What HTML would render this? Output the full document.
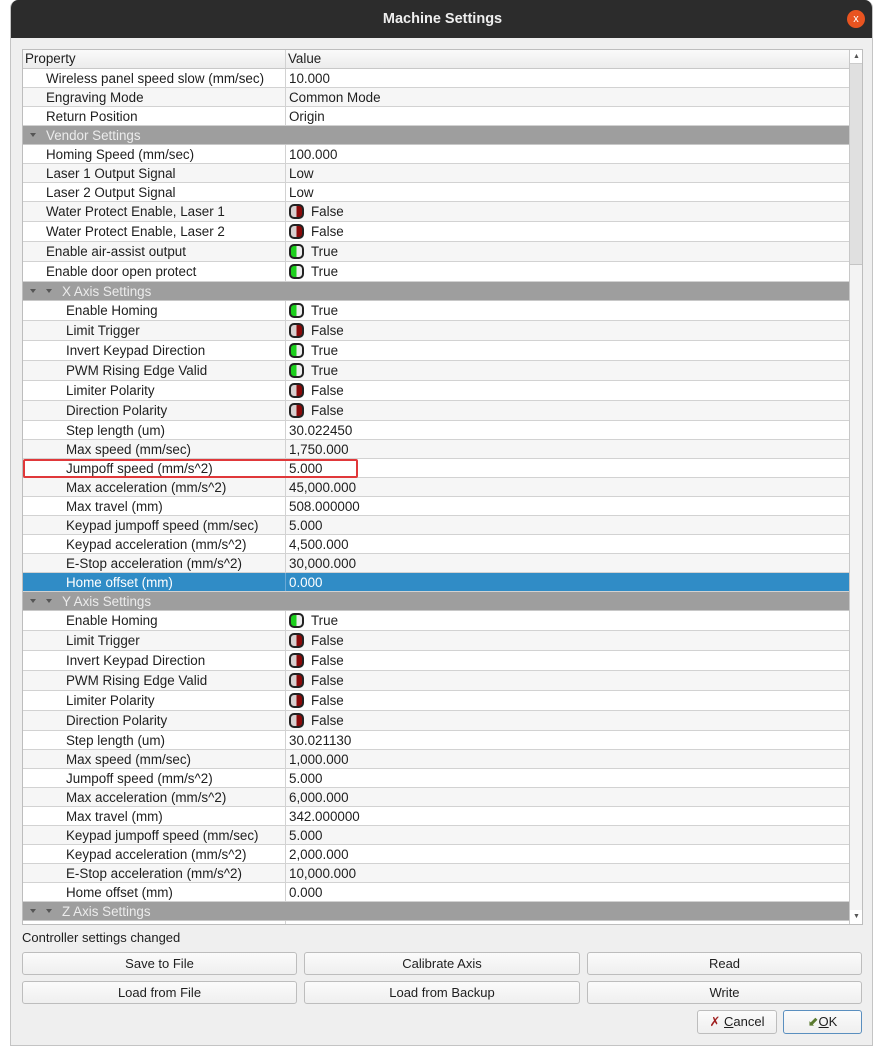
<!DOCTYPE html>
<html><head><meta charset="utf-8"><style>
*{box-sizing:border-box;margin:0;padding:0}
body{width:883px;height:1055px;background:#fff;font-family:"Liberation Sans","DejaVu Sans",sans-serif;font-size:13.4px;color:#1e1e1e;position:relative;overflow:hidden}
.win{position:absolute;left:10px;top:0;width:863px;height:1046px;background:#efefef;border:1px solid #c4c4c4;border-top:none;border-radius:8px 8px 0 0;overflow:hidden}
.title{position:absolute;left:0;top:0;width:863px;height:38px;background:#2c2c2c;color:#eee;font-weight:bold;font-size:14.5px;text-align:center;line-height:38px}
.close{position:absolute;left:836px;top:10px;width:18px;height:18px;border-radius:50%;background:#e95420;color:#fff;font-size:11px;line-height:18px;text-align:center;font-weight:normal}
.tbl{position:absolute;left:11px;top:49px;width:841px;height:876px;border:1px solid #bdbdbd;background:#fff;overflow:hidden}
.hdr{height:19px;display:flex;background:linear-gradient(#fafafa,#ececec);border-bottom:1px solid #c8c8c8}
.hdr div{line-height:18px;padding-left:2px}
.rows{position:absolute;left:0;top:19px;width:826px}
.r{display:flex;border-bottom:1px solid #d2d2d2;background:#fff}
.r:nth-child(even){background:#f6f6f6}
.p{width:263px;border-right:1px solid #d2d2d2;white-space:nowrap;padding-left:23px;display:flex;align-items:center}
.l2{padding-left:43px}
.v{flex:1;padding-left:3px;display:flex;align-items:center}
.t{height:19px}.b{height:20px}
.g{height:19px;background:#9e9e9e!important;color:#ececec;display:flex;align-items:center;border-bottom:1px solid #c8c8c8}
.g .ar{display:inline-block;width:0;height:0;border-left:3px solid transparent;border-right:3px solid transparent;border-top:4px solid #555;margin-left:7px;margin-right:10px}
.sel{background:#308cc6!important;color:#fff}
.sel .p{border-color:#6aa9d6}
.tg{display:inline-block;width:15px;height:15px;border:2px solid #222;border-radius:5px;margin-right:7px;position:relative;overflow:hidden}
.f{background:linear-gradient(90deg,#d8d0d0 50%,#8b0a0a 50%)}
.tr{background:linear-gradient(90deg,#1ccf1c 50%,#ececec 50%)}
.sb{position:absolute;left:826px;top:0;width:14px;height:874px;background:#f3f3f3;border-left:1px solid #c8c8c8}
.thumb{position:absolute;left:0;top:14px;width:13px;height:201px;background:#e0e0e0;border-bottom:1px solid #c4c4c4}
.btn{position:absolute;height:23px;border:1px solid #bdbdbd;border-radius:3px;background:linear-gradient(#fbfbfb,#efefef);text-align:center;line-height:21px;font-size:13px}
.red{position:absolute;left:0;top:409px;width:335px;height:19px;border:2px solid #e0383a;border-radius:2px}
</style></head><body>
<div class="win">
<div class="title">Machine Settings<div class="close">x</div></div>
<div class="tbl">
<div class="hdr"><div style="width:263px;border-right:1px solid #d2d2d2">Property</div><div>Value</div></div>
<div class="rows">
<div class="r t"><div class="p">Wireless panel speed slow (mm/sec)</div><div class="v">10.000</div></div>
<div class="r t"><div class="p">Engraving Mode</div><div class="v">Common Mode</div></div>
<div class="r t"><div class="p">Return Position</div><div class="v">Origin</div></div>
<div class="r g"><span class="ar"></span>Vendor Settings</div>
<div class="r t"><div class="p">Homing Speed (mm/sec)</div><div class="v">100.000</div></div>
<div class="r t"><div class="p">Laser 1 Output Signal</div><div class="v">Low</div></div>
<div class="r t"><div class="p">Laser 2 Output Signal</div><div class="v">Low</div></div>
<div class="r b"><div class="p">Water Protect Enable, Laser 1</div><div class="v"><span class="tg f"></span>False</div></div>
<div class="r b"><div class="p">Water Protect Enable, Laser 2</div><div class="v"><span class="tg f"></span>False</div></div>
<div class="r b"><div class="p">Enable air-assist output</div><div class="v"><span class="tg tr"></span>True</div></div>
<div class="r b"><div class="p">Enable door open protect</div><div class="v"><span class="tg tr"></span>True</div></div>
<div class="r g"><span class="ar"></span><span class="ar" style="margin-left:0"></span>X Axis Settings</div>
<div class="r b"><div class="p l2">Enable Homing</div><div class="v"><span class="tg tr"></span>True</div></div>
<div class="r b"><div class="p l2">Limit Trigger</div><div class="v"><span class="tg f"></span>False</div></div>
<div class="r b"><div class="p l2">Invert Keypad Direction</div><div class="v"><span class="tg tr"></span>True</div></div>
<div class="r b"><div class="p l2">PWM Rising Edge Valid</div><div class="v"><span class="tg tr"></span>True</div></div>
<div class="r b"><div class="p l2">Limiter Polarity</div><div class="v"><span class="tg f"></span>False</div></div>
<div class="r b"><div class="p l2">Direction Polarity</div><div class="v"><span class="tg f"></span>False</div></div>
<div class="r t"><div class="p l2">Step length (um)</div><div class="v">30.022450</div></div>
<div class="r t"><div class="p l2">Max speed (mm/sec)</div><div class="v">1,750.000</div></div>
<div class="r t"><div class="p l2">Jumpoff speed (mm/s^2)</div><div class="v">5.000</div></div>
<div class="r t"><div class="p l2">Max acceleration (mm/s^2)</div><div class="v">45,000.000</div></div>
<div class="r t"><div class="p l2">Max travel (mm)</div><div class="v">508.000000</div></div>
<div class="r t"><div class="p l2">Keypad jumpoff speed (mm/sec)</div><div class="v">5.000</div></div>
<div class="r t"><div class="p l2">Keypad acceleration (mm/s^2)</div><div class="v">4,500.000</div></div>
<div class="r t"><div class="p l2">E-Stop acceleration (mm/s^2)</div><div class="v">30,000.000</div></div>
<div class="r t sel"><div class="p l2">Home offset (mm)</div><div class="v">0.000</div></div>
<div class="r g"><span class="ar"></span><span class="ar" style="margin-left:0"></span>Y Axis Settings</div>
<div class="r b"><div class="p l2">Enable Homing</div><div class="v"><span class="tg tr"></span>True</div></div>
<div class="r b"><div class="p l2">Limit Trigger</div><div class="v"><span class="tg f"></span>False</div></div>
<div class="r b"><div class="p l2">Invert Keypad Direction</div><div class="v"><span class="tg f"></span>False</div></div>
<div class="r b"><div class="p l2">PWM Rising Edge Valid</div><div class="v"><span class="tg f"></span>False</div></div>
<div class="r b"><div class="p l2">Limiter Polarity</div><div class="v"><span class="tg f"></span>False</div></div>
<div class="r b"><div class="p l2">Direction Polarity</div><div class="v"><span class="tg f"></span>False</div></div>
<div class="r t"><div class="p l2">Step length (um)</div><div class="v">30.021130</div></div>
<div class="r t"><div class="p l2">Max speed (mm/sec)</div><div class="v">1,000.000</div></div>
<div class="r t"><div class="p l2">Jumpoff speed (mm/s^2)</div><div class="v">5.000</div></div>
<div class="r t"><div class="p l2">Max acceleration (mm/s^2)</div><div class="v">6,000.000</div></div>
<div class="r t"><div class="p l2">Max travel (mm)</div><div class="v">342.000000</div></div>
<div class="r t"><div class="p l2">Keypad jumpoff speed (mm/sec)</div><div class="v">5.000</div></div>
<div class="r t"><div class="p l2">Keypad acceleration (mm/s^2)</div><div class="v">2,000.000</div></div>
<div class="r t"><div class="p l2">E-Stop acceleration (mm/s^2)</div><div class="v">10,000.000</div></div>
<div class="r t"><div class="p l2">Home offset (mm)</div><div class="v">0.000</div></div>
<div class="r g"><span class="ar"></span><span class="ar" style="margin-left:0"></span>Z Axis Settings</div>
<div class="r t"><div class="p l2"></div><div class="v"></div></div>
</div>
<div class="red"></div>
<div class="sb"><div style="height:14px;background:#fff;border-bottom:1px solid #ccc;text-align:center;font-size:7px;line-height:14px;color:#555">▲</div><div class="thumb"></div><div style="position:absolute;bottom:0;left:0;width:13px;height:14px;background:#fff;text-align:center;font-size:7px;line-height:14px;color:#555">▼</div></div>
</div>
<div style="position:absolute;left:11px;top:930px;font-size:13px">Controller settings changed</div>
<div class="btn" style="left:11px;top:952px;width:275px">Save to File</div>
<div class="btn" style="left:293px;top:952px;width:276px">Calibrate Axis</div>
<div class="btn" style="left:576px;top:952px;width:275px">Read</div>
<div class="btn" style="left:11px;top:981px;width:275px">Load from File</div>
<div class="btn" style="left:293px;top:981px;width:276px">Load from Backup</div>
<div class="btn" style="left:576px;top:981px;width:275px">Write</div>
<div class="btn" style="left:686px;top:1010px;width:80px;height:24px;line-height:22px"><span style="color:#a02020;font-weight:bold">✗</span> <u>C</u>ancel</div>
<div class="btn" style="left:772px;top:1010px;width:79px;height:24px;line-height:22px;border-color:#5a8fbf"><span style="color:#5a7a30">⬋</span><u>O</u>K</div>
</div>
</body></html>
